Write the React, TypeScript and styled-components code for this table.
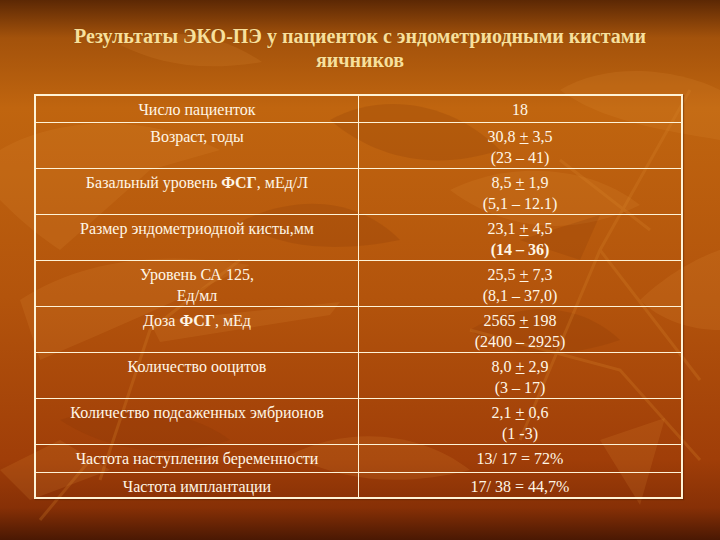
import styled, {createGlobalStyle} from "styled-components"
import {FC, ReactNode} from "react"

const GlobalStyle = createGlobalStyle`
  html, body {
    margin: 0;
    padding: 0;
  }
  body {
    font-family: "Liberation Serif", "Times New Roman", serif;
  }
`

type Row = {
  label: ReactNode
  value: ReactNode
  height: number
}

const Pm: FC<{a: string, b: string}> = ({a, b}) => <>{a} <Under>+</Under> {b}</>

const rows: Row[] = [
  {label: "Число пациенток", value: "18", height: 27},
  {label: "Возраст, годы", value: <><Pm a="30,8" b="3,5" /><br />(23 – 41)</>, height: 45},
  {label: <>Базальный уровень <b>ФСГ</b>, мЕд/Л</>, value: <><Pm a="8,5" b="1,9" /><br />(5,1 – 12.1)</>, height: 45},
  {label: "Размер эндометриодной кисты,мм", value: <><Pm a="23,1" b="4,5" /><br /><b>(14 – 36)</b></>, height: 45},
  {label: <>Уровень СА 125,<br />Ед/мл</>, value: <><Pm a="25,5" b="7,3" /><br />(8,1 – 37,0)</>, height: 45},
  {label: <>Доза <b>ФСГ</b>, мЕд</>, value: <><Pm a="2565" b="198" /><br />(2400 – 2925)</>, height: 45},
  {label: "Количество ооцитов", value: <><Pm a="8,0" b="2,9" /><br />(3 – 17)</>, height: 45},
  {label: "Количество подсаженных эмбрионов", value: <><Pm a="2,1" b="0,6" /><br />(1 -3)</>, height: 45},
  {label: "Частота наступления беременности", value: "13/ 17 = 72%", height: 28},
  {label: "Частота имплантации", value: "17/ 38 = 44,7%", height: 26},
]

// faint leaves and twigs behind the slide
const Leaves: FC = () => (
  <Backdrop viewBox="0 0 720 540" preserveAspectRatio="none">
    <defs>
      <linearGradient id="bg" x1="0" y1="0" x2="0" y2="1">
        <stop offset="0" stopColor="#5c2804" />
        <stop offset="0.07" stopColor="#a3520b" />
        <stop offset="0.2" stopColor="#c0650f" />
        <stop offset="0.55" stopColor="#b3540c" />
        <stop offset="0.85" stopColor="#a03e08" />
        <stop offset="0.94" stopColor="#873006" />
        <stop offset="1" stopColor="#4a1803" />
      </linearGradient>
    </defs>
    <rect width="720" height="540" fill="url(#bg)" />
    <g fill="#e29038" opacity="0.16">
      <path d="M0 150 C50 120 140 110 220 150 L150 170 L60 250 C30 230 10 210 0 200 Z" />
      <path d="M20 300 C80 260 160 250 250 265 C180 300 110 330 40 360 Z" />
      <path d="M150 322 L340 302 L330 315 L160 342 Z" />
      <path d="M450 190 C510 160 590 165 640 205 C580 235 510 235 450 190 Z" />
      <path d="M560 90 C610 60 680 70 720 90 L720 140 C660 130 600 120 560 90 Z" />
      <path d="M600 440 L665 418 L640 505 Z" />
      <path d="M290 455 C350 425 420 432 470 470 C410 485 350 485 290 455 Z" />
      <path d="M640 300 C680 262 720 250 720 250 L720 330 C690 330 660 320 640 300 Z" />
      <path d="M120 45 C160 25 220 32 262 62 C200 72 160 64 120 45 Z" />
      <path d="M0 470 L60 440 L110 470 L30 500 Z" />
    </g>
    <g fill="#7e3204" opacity="0.18">
      <path d="M330 120 C380 92 450 100 500 150 C440 170 380 162 330 120 Z" />
      <path d="M240 222 C300 192 360 200 400 240 C340 252 280 250 240 222 Z" />
      <path d="M470 330 C520 300 580 302 620 340 C560 360 510 360 470 330 Z" />
      <path d="M60 420 C120 400 190 410 230 440 C170 460 110 452 60 420 Z" />
      <path d="M520 240 L600 215 L580 260 Z" />
    </g>
    <g stroke="#d8842a" strokeWidth="3" fill="none" opacity="0.26">
      <path d="M690 90 L600 250 L520 440" />
      <path d="M600 250 L700 380" />
      <path d="M560 160 L650 230" />
      <path d="M470 330 L620 370 L700 460" />
      <path d="M100 480 L150 330 L240 260" />
      <path d="M40 520 L90 460" />
    </g>
  </Backdrop>
)

const App: FC = () => (
  <>
    <GlobalStyle />
    <Slide>
      <Leaves />
      <Content>
        <Title>Результаты ЭКО-ПЭ у пациенток с эндометриодными кистами<br />яичников</Title>
        <Table>
          <tbody>
            {rows.map((row, i) => (
              <Tr key={`row-${i}`} $h={row.height}>
                <Td>{row.label}</Td>
                <Td>{row.value}</Td>
              </Tr>
            ))}
          </tbody>
        </Table>
      </Content>
    </Slide>
  </>
)

const Slide = styled.div`
  position: relative;
  width: 720px;
  height: 540px;
  overflow: hidden;
  background: #b45a0c;
`

const Backdrop = styled.svg`
  position: absolute;
  inset: 0;
  width: 720px;
  height: 540px;
`

const Content = styled.div`
  position: relative;
  display: flex;
  flex-direction: column;
  align-items: center;
  padding-top: 24px;
`

const Title = styled.h1`
  margin: 0;
  font-family: "Liberation Serif", "Times New Roman", serif;
  font-size: 20px;
  font-weight: 700;
  line-height: 24px;
  color: #f8e09c;
  text-align: center;
  text-shadow: 0 0 1px rgba(90, 40, 0, 0.4);
`

const Table = styled.table`
  margin-top: 22px;
  width: 649px;
  margin-left: -3px;
  border-collapse: collapse;
  border: 2px solid #fff3d6;
  box-shadow: 1px 1px 1px rgba(60, 20, 0, 0.35);
`

const Tr = styled.tr<{$h: number}>`
  height: ${p => p.$h}px;
`

const Td = styled.td`
  width: 50%;
  padding: 3px 0 0;
  vertical-align: top;
  text-align: center;
  border: 1px solid #fff3d6;
  color: #fff6e6;
  font-family: "Liberation Serif", "Times New Roman", serif;
  font-size: 16px;
  line-height: 21px;
  box-sizing: border-box;
  b {
    font-weight: 700;
  }
`

const Under = styled.span`
  text-decoration: underline;
`

export default App
